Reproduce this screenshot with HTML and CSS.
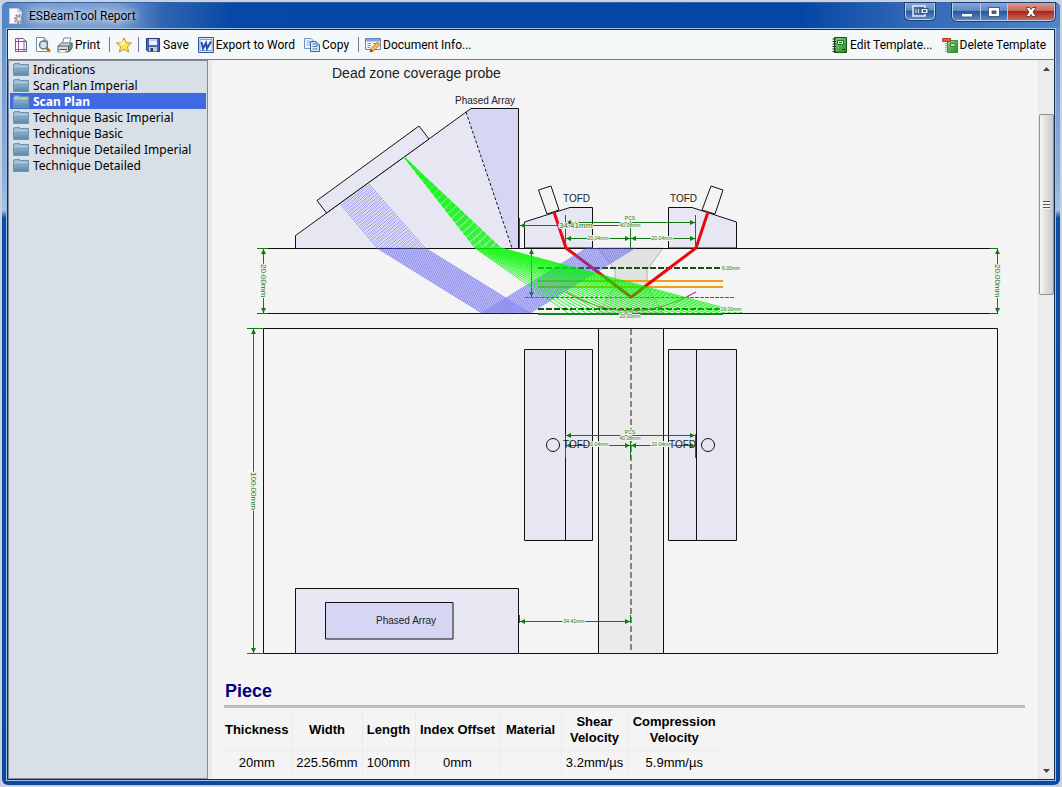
FILE: index.html
```
<!DOCTYPE html>
<html lang="en">
<head>
    <meta charset="UTF-8">
    <meta name="viewport" content="width=device-width, initial-scale=1.0">
    <title>ESBeamTool Report</title>
    <link rel="stylesheet" href="styles.css">
</head>
<body>
    <svg class="defs" width="0" height="0" aria-hidden="true">
        <defs>
            <linearGradient id="folderFill" x1="0" y1="0" x2="0" y2="1">
                <stop offset="0" stop-color="#a5c3d8"/>
                <stop offset="1" stop-color="#5689ac"/>
            </linearGradient>
            <linearGradient id="bookFill" x1="0" y1="0" x2="1" y2="1">
                <stop offset="0" stop-color="#8bd672"/>
                <stop offset="1" stop-color="#238b27"/>
            </linearGradient>
            <symbol id="folder" viewBox="0 0 16 16">
                <path d="M1.500 3.500V2.500H6.500V3.500H15.500V14.500H.5V3.500Z" fill="url(#folderFill)" stroke="#6f93ab"/>
                <path d="M1 5.500H15" stroke="#b9d2e2"/>
            </symbol>
        </defs>
    </svg>

    <div class="window">
        <header class="titlebar">
            <svg class="icon" viewBox="0 0 16 16">
                <path d="M1.500.5H10L13.500 4V15.500H1.500Z" fill="#fafafa" stroke="#c6ccd6"/>
                <path d="M10 .5V4H13.500" fill="#dfe3ea" stroke="#b7bdc8"/>
                <circle cx="11" cy="11" r="4" fill="none" stroke="#858b94" stroke-width="2" stroke-dasharray="2 1"/>
                <circle cx="11" cy="11" r="2.500" fill="#e6e8ec" stroke="#858b94"/>
            </svg>
            <h1>ESBeamTool Report</h1>
            <div class="window-buttons">
                <button class="dock" aria-label="Dock window">
                    <svg width="17" height="12" viewBox="0 0 17 12"><path d="M1 1H13V11H1Z" fill="#4a6ba0" stroke="#e8eef8" stroke-width="1.500"/><path d="M4 4V8M6.500 4V8" stroke="#c9d6ea"/><path d="M9 3.500H16V8.500H9Z" fill="#eef2f8" stroke="#3b5379"/><path d="M11 5H14V7H11Z" fill="#3b5379"/></svg>
                </button>
                <div class="button-group">
                    <button aria-label="Minimize"><svg width="14" height="12" viewBox="0 0 14 12"><path d="M1.500 7.500H12.500V11H1.500Z" fill="#fff" stroke="#4c5a75"/></svg></button>
                    <button aria-label="Maximize"><svg width="14" height="12" viewBox="0 0 14 12"><path d="M1.500 1.500H12.500V10.500H1.500ZM5 5V7.500H9V5Z" fill="#fff" fill-rule="evenodd" stroke="#4c5a75"/></svg></button>
                    <button class="close" aria-label="Close"><svg width="14" height="12" viewBox="0 0 14 12"><path d="M2 1.500H5.500L7 3.500 8.500 1.500H12L9 6 12 10.500H8.500L7 8.500 5.500 10.500H2L5 6Z" fill="#fff" stroke="#65434a"/></svg></button>
                </div>
            </div>
        </header>

        <div class="client">
            <nav class="toolbar">
                <button class="icon-only" aria-label="Page setup">
                    <svg class="icon" viewBox="0 0 16 16"><path d="M2.500 1.500H10L13.500 4.500V14.500H2.500Z" fill="#fff" stroke="#55639a"/><path d="M5.500 1V15M11 3V15M2 4.500H13M2 12.500H14" fill="none" stroke="#b0489a"/></svg>
                </button>
                <button class="icon-only" aria-label="Print preview">
                    <svg class="icon" viewBox="0 0 16 16"><path d="M1.500.5H9L12.500 4V14.500H1.500Z" fill="#fff" stroke="#7488b0"/><path d="M9 .5V4H12.500" fill="#ccd7e8" stroke="#7488b0"/><circle cx="8.500" cy="8" r="4" fill="#cfe3f3" stroke="#687485" stroke-width="1.500"/><path d="M11.500 11L15 14.500" stroke="#b06c20" stroke-width="2.500"/></svg>
                </button>
                <button>
                    <svg class="icon" viewBox="0 0 16 16"><path d="M5 7L7 1H14L12 7Z" fill="#fff" stroke="#6a86b5"/><path d="M1 9L4.500 6H15L14.500 12 11 15H1Z" fill="#d4dae0" stroke="#5b6670"/><path d="M1 9H11.500L15 6V11L11.500 15V9" fill="#8d98a2" stroke="#4d5860"/><path d="M2.500 12.500H10" stroke="#45505a"/><path d="M3 13H8V15.500H2Z" fill="#eef4fb"/><path d="M12 9.500H14V12H12Z" fill="#31c43d"/></svg>
                    <span>Print</span>
                </button>
                <i class="separator"></i>
                <button class="icon-only" aria-label="Favorite">
                    <svg class="icon" viewBox="0 0 16 16"><path d="M8 .8L10.200 5.600 15.500 6.100 11.500 9.700 12.700 15.200 8 12.300 3.300 15.200 4.500 9.700 .5 6.100 5.800 5.600Z" fill="#fbe257" stroke="#b89a3a"/><path d="M8 3L9 6.500 7 8 3 7" fill="#fff5ae"/></svg>
                </button>
                <i class="separator"></i>
                <button>
                    <svg class="icon" viewBox="0 0 16 16"><path d="M1.500 1.500H14.500V14.500H3L1.500 13Z" fill="#4664c0" stroke="#2a3878"/><path d="M4 2H12V8H4Z" fill="#eaf1fb"/><path d="M4 2H12V4H4Z" fill="#bfd0ec"/><path d="M4 10H12V14.500H4Z" fill="#c8cdd8"/><path d="M5.500 11H8V14.500H5.500Z" fill="#27356c"/></svg>
                    <span>Save</span>
                </button>
                <button>
                    <svg class="icon" viewBox="0 0 16 16"><path d="M.5.5H15.500V15.500H.5Z" fill="#dbe7fa" stroke="#2d57a5"/><path d="M2 2.500H14V13.500H2Z" fill="#f6f9ff" stroke="#7da0d7"/><path d="M3.500 5L5 11.500 8 6 9 11.500 13 4.500" fill="none" stroke="#2350a4" stroke-width="2"/></svg>
                    <span>Export to Word</span>
                </button>
                <button>
                    <svg class="icon" viewBox="0 0 16 16"><path d="M.5 1.500H7L9.500 4V11.500H.5Z" fill="#edf5ff" stroke="#718fc0"/><path d="M2.500 4H6M2.500 6H7M2.500 8H7" stroke="#85a9dc"/><path d="M6.500 4.500H12L15.500 8V14.500H6.500Z" fill="#dceafd" stroke="#3a61a4"/><path d="M12 4.500V8H15.500M8.500 7H11M8.500 9.500H13.500M8.500 12H13.500" fill="none" stroke="#4979bd"/></svg>
                    <span>Copy</span>
                </button>
                <i class="separator"></i>
                <button>
                    <svg class="icon" viewBox="0 0 16 16"><path d="M.5 1.500H15.500V12.500H.5Z" fill="#f5f9ff" stroke="#6685bb"/><path d="M1 2H15V4.500H1Z" fill="#7ea7e0"/><path d="M2.500 6.500H6M2.500 8.500H6M2.500 10.500H5M8 6.500H13" stroke="#7392bd"/><path d="M5 15L6 11.500 12.500 5 15 7.500 8.500 14Z" fill="#f6bd54" stroke="#ad762c"/><path d="M5 15L6 12 8 14Z" fill="#5b4a3b"/></svg>
                    <span>Document Info...</span>
                </button>
                <div class="toolbar-right">
                    <button>
                        <svg class="icon" viewBox="0 0 16 16"><path d="M2.500.5H14.500V15.500H2.500Z" fill="url(#bookFill)" stroke="#15521c"/><path d="M5.500 3.500H11.500V7.500H5.500Z" fill="#d8f4ce" stroke="#25702a"/><path d="M7 5.500H10M10 12.500H13" stroke="#17541c"/><path d="M.5 2H4M.5 4.500H4M.5 7H4M.5 9.500H4M.5 12H4M.5 14.500H4" stroke="#242424"/></svg>
                        <span>Edit Template...</span>
                    </button>
                    <button>
                        <svg class="icon" viewBox="0 0 16 16"><path d="M5.500 3.500H15.500V15.500H5.500Z" fill="url(#bookFill)" stroke="#3e8b44"/><path d="M8.500 6.500H13V9.500H8.500Z" fill="#c1e7b6" stroke="#3a8441"/><path d="M4 6V15" stroke="#565656" stroke-dasharray="1 1"/><path d="M.5 1.500H8.500V4.500H.5Z" fill="#e36143" stroke="#a83a28"/></svg>
                        <span>Delete Template</span>
                    </button>
                </div>
            </nav>

            <div class="content">
                <aside class="sidebar">
                    <ul>
                        <li><a href="#"><svg class="icon"><use href="#folder"/></svg>Indications</a></li>
                        <li><a href="#"><svg class="icon"><use href="#folder"/></svg>Scan Plan Imperial</a></li>
                        <li><a href="#" class="selected"><svg class="icon"><use href="#folder"/></svg>Scan Plan</a></li>
                        <li><a href="#"><svg class="icon"><use href="#folder"/></svg>Technique Basic Imperial</a></li>
                        <li><a href="#"><svg class="icon"><use href="#folder"/></svg>Technique Basic</a></li>
                        <li><a href="#"><svg class="icon"><use href="#folder"/></svg>Technique Detailed Imperial</a></li>
                        <li><a href="#"><svg class="icon"><use href="#folder"/></svg>Technique Detailed</a></li>
                    </ul>
                </aside>

                <main class="report">
                    <svg class="drawing" viewBox="212 60 826 612">
                        <defs>
                            <marker id="arrow" viewBox="0 0 6 6" refX="6" refY="3" markerWidth="5" markerHeight="5" orient="auto-start-reverse">
                                <path d="M0 0L6 3 0 6Z" fill="#157615"/>
                            </marker>
                        </defs>

                        <!-- side view: wedges and probes -->
                        <text x="332" y="78" class="caption">Dead zone coverage probe</text>
                        <text x="455" y="104" class="label">Phased Array</text>
                        <path class="wedge" d="M295.500 248V235.500L471 108.500H518.500V248Z"/>
                        <path class="damping" d="M466 112L471 108.500H518.500V248H512Z"/>
                        <path class="outline" d="M295.500 248V235.500L471 108.500H518.500V248"/>
                        <path class="outline" stroke-dasharray="3 2" d="M466 112L512 248"/>
                        <path class="wedge outline" d="M326.500 213L317 200.500 419 126 429 139Z"/>
                        <path class="wedge outline" d="M524.500 248V222L570 207.500H592.500V248Z"/>
                        <path class="wedge outline" d="M736.500 248V222L692 207.500H668.500V248Z"/>
                        <path class="piece outline" d="M547 214L538.500 190 551 186 559 210Z"/>
                        <path class="piece outline" d="M715 214L723 190 711 186 702 210Z"/>
                        <text x="563" y="202" class="label">TOFD</text>
                        <text x="670" y="202" class="label">TOFD</text>

                        <!-- weld and zones -->
                        <path class="weld" d="M598 248H663L647 270V286L663 313H598L615 286V270Z"/>
                        <path class="outline" d="M263 248.500H998M263 313.500H998"/>
                        <path d="M538 281H723M538 287H723" stroke="#f0a012" stroke-width="2"/>
                        <path d="M538 268H723M538 309H723" stroke="#125212" stroke-width="2" stroke-dasharray="6 2"/>
                        <path d="M538 314H723" stroke="#16821c" stroke-width="2"/>
                        <path d="M525 297.500H735" stroke="#208030" stroke-dasharray="4 1"/>
                        <path d="M531.500 249V297" class="dim ends"/>
                        <path d="M566 292Q630 330 696 292" fill="none" stroke="#a35c48"/>
                        <path d="M687 297L696 292" stroke="#e032a8"/>
                        <path d="M554 212L566 248 631 297 696 248 708 212" fill="none" stroke="#ea0808" stroke-width="3"/>

                        <g id="skewBeams" class="skew"></g>
                        <g id="sectorBeams" class="sector"></g>

                        <!-- side view: dimensions -->
                        <path class="dim" d="M519.500 218V248M565.500 215V248M630.500 219V248M695.500 215V248"/>
                        <path class="dim ends" d="M520 225.500H630"/>
                        <path class="dim ends" d="M566 222.500H695"/>
                        <path class="dim ends" d="M566 238.500H630"/>
                        <path class="dim ends" d="M631 238.500H695"/>
                        <text x="559" y="228" class="dim-text">34.41mm</text>
                        <text x="630" y="220" class="tiny-text">PCS</text>
                        <text x="630" y="227" class="tiny-text">40.08mm</text>
                        <text x="598" y="240" class="tiny-text">20.04mm</text>
                        <text x="662" y="240" class="tiny-text">20.04mm</text>
                        <text x="731" y="270" class="tiny-text">6.00mm</text>
                        <text x="731" y="311" class="tiny-text">19.00mm</text>
                        <text x="630" y="318" class="tiny-text">20.00mm</text>
                        <path class="dim" d="M257 248.500H268M257 313.500H268M990 248.500H998M990 313.500H998"/>
                        <path class="dim ends" d="M263.500 249V313"/>
                        <path class="dim ends" d="M997.500 249V313"/>
                        <text transform="translate(261 264) rotate(90)" class="dim-text">20.00mm</text>
                        <text transform="translate(995 264) rotate(90)" class="dim-text">20.00mm</text>

                        <!-- top view -->
                        <path class="outline" d="M263.500 328.500H997.500V653.500H263.500Z"/>
                        <path class="strip outline" d="M598.500 328.500H663.500V653.500H598.500Z"/>
                        <path d="M631 329V653" stroke="#858585" stroke-width="2" stroke-dasharray="6 3"/>
                        <path class="wedge outline" d="M524.500 349.500H592.500V540.500H524.500Z"/>
                        <path class="wedge outline" d="M668.500 349.500H736.500V540.500H668.500Z"/>
                        <path class="outline" d="M565.500 350V540M696.500 350V540"/>
                        <circle class="outline" cx="553" cy="445" r="6.500"/>
                        <circle class="outline" cx="708" cy="445" r="6.500"/>
                        <path class="wedge outline" d="M295.500 588.500H518.500V653.500H295.500Z"/>
                        <path class="damping outline" d="M325.500 602.500H453V639H325.500Z"/>
                        <text x="376" y="624" class="label">Phased Array</text>

                        <path class="dim" d="M565.500 434V458M630.500 438V459M695.500 434V458"/>
                        <path class="dim ends" d="M566 435.500H695"/>
                        <path class="dim ends" d="M566 445.500H630"/>
                        <path class="dim ends" d="M631 445.500H695"/>
                        <text x="630" y="434" class="tiny-text">PCS</text>
                        <text x="630" y="440" class="tiny-text">40.08mm</text>
                        <text x="598" y="446" class="tiny-text">20.04mm</text>
                        <text x="662" y="446" class="tiny-text">20.04mm</text>
                        <text x="563" y="448" class="label">TOFD</text>
                        <text x="669" y="448" class="label">TOFD</text>
                        <path class="dim" d="M519.500 615V623M630.500 615V623"/>
                        <path class="dim ends" d="M520 621.500H630"/>
                        <text x="574" y="623" class="tiny-text">34.41mm</text>
                        <path class="dim" d="M247 328.500H263M247 653.500H263"/>
                        <path class="dim ends" d="M253.500 329V653"/>
                        <text transform="translate(251 472) rotate(90)" class="dim-text">100.00mm</text>
                    </svg>

                    <section class="piece-section">
                        <h2>Piece</h2>
                        <table>
                            <colgroup>
                                <col class="col-medium"><col class="col-medium"><col class="col-small"><col class="col-large"><col class="col-material"><col class="col-shear"><col class="col-large">
                            </colgroup>
                            <thead>
                                <tr><th>Thickness</th><th>Width</th><th>Length</th><th>Index Offset</th><th>Material</th><th>Shear Velocity</th><th>Compression Velocity</th></tr>
                            </thead>
                            <tbody>
                                <tr><td>20mm</td><td>225.56mm</td><td>100mm</td><td>0mm</td><td></td><td>3.2mm/µs</td><td>5.9mm/µs</td></tr>
                            </tbody>
                        </table>
                    </section>
                </main>

                <div class="scrollbar">
                    <button aria-label="Scroll up"><svg width="7" height="4" viewBox="0 0 7 4"><path d="M0 4L3.500 0 7 4Z" fill="#444"/></svg></button>
                    <div class="track"><div class="thumb"><i></i></div></div>
                    <button aria-label="Scroll down"><svg width="7" height="4" viewBox="0 0 7 4"><path d="M0 0L3.500 4 7 0Z" fill="#444"/></svg></button>
                </div>
            </div>
        </div>
    </div>

    <script>
        // each beam runs through points interpolated between its first and last ray
        function drawBeams(id, first, last, count, dash) {
            const group = document.getElementById(id);
            for (let i = 0; i < count; i++) {
                const t = i / (count - 1);
                const points = first.map((p, n) => [
                    p[0] + (last[n][0] - p[0]) * t,
                    p[1] + (last[n][1] - p[1]) * t
                ]);
                const inWedge = document.createElementNS("http://www.w3.org/2000/svg", "polyline");
                inWedge.setAttribute("points", points.slice(0, 2).join(" "));
                inWedge.setAttribute("stroke-dasharray", dash);
                group.appendChild(inWedge);

                const inPiece = document.createElementNS("http://www.w3.org/2000/svg", "polyline");
                inPiece.setAttribute("points", points.slice(1).join(" "));
                group.appendChild(inPiece);
            }
        }

        drawBeams("skewBeams", [[341, 205], [377, 248], [482, 313], [587, 248]], [[369, 184], [425, 248], [530, 313], [635, 248]], 24, "2 1");
        drawBeams("sectorBeams", [[404, 157], [475, 248], [568, 313]], [[404, 157], [501, 248], [743, 313]], 30, "5 1");
    </script>
</body>
</html>
```
FILE: styles.css
```
* {
    box-sizing: border-box;
}
body {
    margin: 0;
    background-color: #c8d2de;
    font-family: "Noto Sans", sans-serif;
    font-size: 12px;
    color: #000;
}
.defs {
    position: absolute;
}
button {
    padding: 0;
    border: none;
    background: none;
    font: inherit;
    color: inherit;
}
.icon {
    width: 16px;
    height: 16px;
    flex: none;
}
.window {
    display: flex;
    flex-direction: column;
    height: calc(100vh - 4px);
    margin: 2px;
    padding: 0 4px 4px;
    border-radius: 6px;
    background: linear-gradient(to bottom, #5d8ac6 0, #8db2df 180px, #a7c3e7 208px, #0c4ba8 216px, #0a48a2 100%);
}
.titlebar {
    display: flex;
    align-items: center;
    height: 26px;
    flex: none;
    margin: 0 -4px;
    padding: 0 5px 0 6px;
    border-radius: 6px 6px 0 0;
    border-top: 1px solid #3563a9;
    background: linear-gradient(to right, #5182c4 0, #7b9dd0 40px, #7b9dd0 115px, #3165b2 160px, #0747a5 230px, #0546a5 800px, #2f66b5 900px, #5484c5 100%);
}
.titlebar h1 {
    margin: 0 0 0 5px;
    font-family: Roboto, sans-serif;
    font-size: 12px;
    font-weight: normal;
    text-shadow: 0 0 6px #fff, 0 0 8px #dce8f7;
}
.window-buttons {
    display: flex;
    gap: 17px;
    align-self: flex-start;
    margin-left: auto;
}
.window-buttons button {
    display: flex;
    align-items: center;
    justify-content: center;
    width: 27px;
    height: 17px;
    background: linear-gradient(to bottom, #87a8d6 0, #6088c4 45%, #2457a2 50%, #5c87c5 100%);
}
.window-buttons .dock {
    width: 30px;
}
.window-buttons .dock,
.button-group {
    border: 1px solid #bdd0ec;
    border-top: none;
    border-radius: 0 0 5px 5px;
    box-shadow: 0 0 0 1px #1c3f78;
    overflow: hidden;
}
.button-group {
    display: flex;
}
.button-group button + button {
    border-left: 1px solid #b4c6e2;
}
.window-buttons .close {
    width: 47px;
    background: linear-gradient(to bottom, #dc9d92 0, #c96758 45%, #a82618 50%, #cd6754 100%);
}
.client {
    display: flex;
    flex-direction: column;
    flex: 1;
    min-height: 0;
    border: 1px solid #9ec3ea;
    background-color: #f4f4f4;
}
.toolbar {
    display: flex;
    align-items: center;
    gap: 6px;
    height: 31px;
    flex: none;
    padding: 0 8px 0 5px;
    border: 1px solid #162a50;
    border-bottom-color: #767b98;
    background-color: #f5f8f8;
    font-family: Roboto, sans-serif;
}
.toolbar button {
    display: flex;
    align-items: center;
    gap: 2px;
    padding-right: 3px;
    white-space: nowrap;
}
.toolbar .icon-only {
    padding: 0;
}
.separator {
    width: 1px;
    height: 15px;
    background-color: #73779a;
}
.toolbar-right {
    display: flex;
    gap: 6px;
    margin-left: auto;
}
.toolbar-right button:last-child {
    padding-right: 0;
}
.content {
    display: flex;
    flex: 1;
    min-height: 0;
    border: 1px solid #162a50;
    border-top: none;
}
.sidebar {
    width: 200px;
    flex: none;
    padding: 0 1px;
    border: 1px solid #7f8896;
    background-color: #d8dfe7;
}
.sidebar ul {
    margin: 0;
    padding: 0;
    list-style: none;
}
.sidebar a {
    display: flex;
    align-items: center;
    gap: 4px;
    height: 16px;
    padding-left: 3px;
    color: #000;
    text-decoration: none;
    white-space: nowrap;
}
.sidebar .selected {
    background-color: #4169e1;
    color: #fff;
    font-weight: bold;
}
.report {
    flex: 1;
    min-width: 0;
    overflow: hidden;
    border-left: 4px solid #ebebeb;
    background-color: #f4f4f4;
    font-family: "Liberation Sans", Arial, sans-serif;
}
.drawing {
    display: block;
    width: 100%;
}
.wedge {
    fill: #e7e7f4;
}
.damping {
    fill: #d6d6f4;
}
.piece {
    fill: #f4f4f4;
}
.strip {
    fill: #ebebeb;
}
.weld {
    fill: #e2e2e2;
    stroke: #b2b2b2;
}
.outline {
    stroke: #111;
    stroke-width: 1px;
}
path.outline:not(.wedge):not(.damping):not(.piece):not(.strip),
circle.outline {
    fill: none;
}
.skew,
.sector {
    fill: none;
    stroke-width: 1px;
}
.skew {
    stroke: #5656f0;
    opacity: 0.65;
}
.sector {
    stroke: #00f800;
    opacity: 0.85;
}
.dim {
    fill: none;
    stroke: #157615;
}
.ends {
    marker-start: url(#arrow);
    marker-end: url(#arrow);
}
.caption {
    font-size: 14px;
    fill: #222;
}
.label {
    font-size: 10px;
    fill: #222;
}
.dim-text,
.tiny-text {
    fill: #157615;
    stroke: #f4f4f4;
    stroke-width: 2px;
    paint-order: stroke;
}
.dim-text {
    font-size: 8px;
}
.tiny-text {
    font-size: 5px;
    text-anchor: middle;
}
.piece-section {
    padding: 8px 13px 0 10px;
}
.piece-section h2 {
    margin: 0 0 0 2px;
    padding: 0 0 3px 1px;
    border-bottom: 3px solid #bdbdbd;
    font-size: 18px;
    line-height: 22px;
    color: #000080;
}
table {
    margin-top: 2px;
    border-collapse: collapse;
    table-layout: fixed;
    width: 498px;
    font-size: 13px;
    line-height: 16px;
    text-align: center;
}
th,
td {
    padding: 4px 0;
    border-right: 1px solid #ebebeb;
}
th {
    border-bottom: 1px solid #ebebeb;
}
th:last-child,
td:last-child {
    border-right: none;
}
.col-medium {
    width: 70px;
}
.col-small {
    width: 53px;
}
.col-large {
    width: 85px;
}
.col-material {
    width: 61px;
}
.col-shear {
    width: 67px;
}
.col-large:last-child {
    width: 92px;
}
.scrollbar {
    display: flex;
    flex-direction: column;
    width: 16px;
    flex: none;
    border-left: 1px solid #e2e2e2;
    background-color: #ececec;
}
.scrollbar button {
    display: flex;
    align-items: center;
    justify-content: center;
    height: 17px;
}
.track {
    flex: 1;
    padding-top: 37px;
}
.thumb {
    display: flex;
    align-items: center;
    justify-content: center;
    height: 28%;
    border: 1px solid #929292;
    border-radius: 2px;
    background: linear-gradient(to right, #f6f6f6, #dedede 50%, #c6c8cb);
}
.thumb i {
    width: 7px;
    height: 8px;
    background: repeating-linear-gradient(to bottom, #555 0, #555 1px, #f5f5f5 1px, #f5f5f5 3px);
}
```
